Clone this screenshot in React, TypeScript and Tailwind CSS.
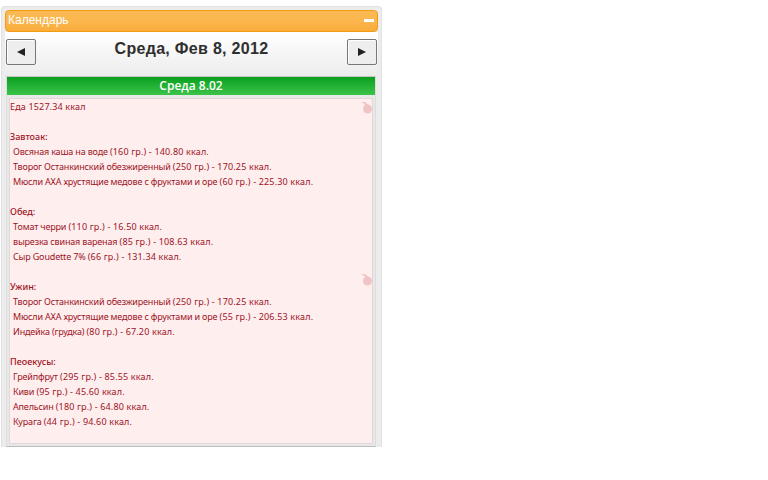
const meals = [
  {
    title: 'Завтоак:',
    items: [
      'Овсяная каша на воде (160 гр.) - 140.80 ккал.',
      'Творог Останкинский обезжиренный (250 гр.) - 170.25 ккал.',
      'Мюсли АХА хрустящие медове с фруктами и оре (60 гр.) - 225.30 ккал.',
    ],
  },
  {
    title: 'Обед:',
    items: [
      'Томат черри (110 гр.) - 16.50 ккал.',
      'вырезка свиная вареная (85 гр.) - 108.63 ккал.',
      'Сыр Goudette 7% (66 гр.) - 131.34 ккал.',
    ],
  },
  {
    title: 'Ужин:',
    items: [
      'Творог Останкинский обезжиренный (250 гр.) - 170.25 ккал.',
      'Мюсли АХА хрустящие медове с фруктами и оре (55 гр.) - 206.53 ккал.',
      'Индейка (грудка) (80 гр.) - 67.20 ккал.',
    ],
  },
  {
    title: 'Пеоекусы:',
    items: [
      'Грейпфрут (295 гр.) - 85.55 ккал.',
      'Киви (95 гр.) - 45.60 ккал.',
      'Апельсин (180 гр.) - 64.80 ккал.',
      'Курага (44 гр.) - 94.60 ккал.',
    ],
  },
];

function Apple() {
  return (
    <svg width="11" height="12" viewBox="0 0 11 12" fill="#f0c4c4">
      <circle cx="5.5" cy="7" r="4.5" />
      <path d="M0 0h3l3 2.5v2H3.5L2 1.2H0z" />
    </svg>
  );
}

function NavButton({ glyph }: { glyph: 'left' | 'right' }) {
  return (
    <button className="w-[30px] h-[26px] flex items-center justify-center bg-[#eeeeee] border border-[#777] rounded-[2px] shadow-[inset_1px_1px_0_#fff]">
      <svg width="9" height="8" viewBox="0 0 9 8" fill="#222">
        <path d={glyph === 'left' ? 'M8 0v8L0 4z' : 'M1 0v8l8-4z'} />
      </svg>
    </button>
  );
}

function Item({ text }: { text: string }) {
  // digits run wider than the names in the original face
  const cut = text.lastIndexOf('(');
  return (
    <div className="pl-[3px]">
      <span className="tracking-[-0.17px]">{text.slice(0, cut)}</span>
      <span className="tracking-[0.16px]">{text.slice(cut)}</span>
    </div>
  );
}

export default function App() {
  return (
    <div className="w-[768px] h-[480px] bg-white font-['Liberation_Sans',Arial,sans-serif]">
      <div className="ml-[1px] w-[381px] h-[447px] pt-[6px]">
        <div className="h-full border border-b-0 border-[#e2e2e2] rounded-t-[4px] bg-[#ececec] px-[3px] pt-[3px] flex flex-col overflow-hidden">
          <div className="h-[22px] shrink-0 flex items-center justify-between pl-[2px] pr-[3px] pb-[2px] rounded-[4px] border border-[#f39c12] bg-[linear-gradient(#fbb954_0%,#fbb64e_50%,#f9ad3a_100%)] text-white text-[12px]">
            <span>Календарь</span>
            <span className="w-[10px] h-[3px] bg-white" />
          </div>
          <div className="h-[44px] shrink-0 flex items-start justify-between pl-[1px] pr-[1px] pt-[7px] bg-[linear-gradient(#ffffff,#ececec)]">
            <NavButton glyph="left" />
            <h1 className="text-[16px] tracking-[0.3px] font-bold text-[#2f2f2f] leading-[20px]">Среда, Фев 8, 2012</h1>
            <NavButton glyph="right" />
          </div>
          <div className="ml-[1px] mr-[2px] flex-1 flex flex-col min-h-0 bg-[#e8e8e8] border border-[#dddddd] border-t-[#c4c4c4] border-b-[#bbbbbb] pb-[2px]">
            <div className="h-[18px] shrink-0 bg-[linear-gradient(#0a9f1e,#3cc34a)] text-white text-center text-[12px] font-semibold leading-[18px] font-['Open_Sans',sans-serif]">
              Среда 8.02
            </div>
            <div className="flex-1 min-h-0 mt-[3px] mx-[2px] bg-[#ffeeee] border border-[#e0d8d8] text-[9px] leading-[15px] text-[#9c1426] font-['Noto_Sans',sans-serif] relative">
              <div className="absolute right-[-1px] top-[3px]"><Apple /></div>
              <div className="absolute right-[-1px] top-[175px]"><Apple /></div>
              <div className="tracking-[0.16px]">Еда 1527.34 ккал</div>
              <div className="h-[15px]" />
              {meals.map((m) => (
                <div key={m.title} className="mb-[15px]">
                  <div className="font-medium">{m.title}</div>
                  {m.items.map((item, i) => (
                    <Item key={i} text={item} />
                  ))}
                </div>
              ))}
            </div>
          </div>
        </div>
      </div>
    </div>
  );
}
